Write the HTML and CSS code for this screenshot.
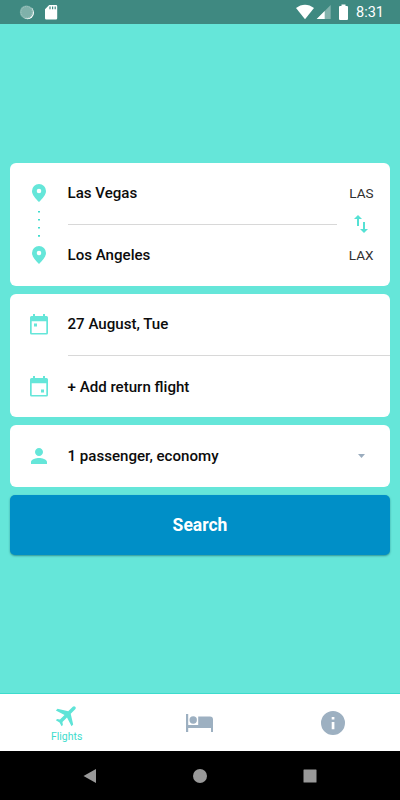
FILE: index.html
```html
<!DOCTYPE html>
<html lang="en">
<head>
<meta charset="utf-8">
<title>Flights</title>
<link rel="stylesheet" href="styles.css">
</head>
<body>
<div class="app">
  <header class="status">
    <svg class="status-left" width="60" height="24" viewBox="0 0 60 24">
      <circle cx="14.6" cy="12.8" r="6.4" fill="#fff"/>
      <circle cx="13.4" cy="12" r="6.6" fill="#7fb1aa"/>
      <circle cx="13.6" cy="12.1" r="5.6" fill="none" stroke="#a8cbc6" stroke-width=".8" stroke-dasharray="1 1"/>
      <path d="M32 9.200l4.200-4.200h6.800a1.200 1.200 0 0 1 1.200 1.200v12a1.200 1.200 0 0 1-1.200 1.200H33.200a1.200 1.200 0 0 1-1.200-1.200z" fill="#fff"/>
      <path d="M37 6.500v2.700M39.600 6.500v2.700M42.200 6.500v2.700" stroke="#3f8981" stroke-width="1.200"/>
    </svg>
    <svg class="status-right" width="54" height="24" viewBox="0 0 54 24">
      <path d="M0 8C5.500 3.500 12.500 3.500 18 8L9 19.200z" fill="#fff"/>
      <path d="M34.700 5v14H20.700z" fill="#83b3ad"/>
      <path d="M28.700 11v8h-8z" fill="#fff"/>
      <path d="M45.500 4.600h4v1.400h1.500a1 1 0 0 1 1 1v12a1 1 0 0 1-1 1h-7a1 1 0 0 1-1-1V7a1 1 0 0 1 1-1h1.500z" fill="#fff"/>
    </svg>
    <span class="clock">8:31</span>
  </header>

  <main class="search">
    <section class="card route">
      <div class="row">
        <span class="lead"><svg width="14" height="18" viewBox="0 0 14 18"><path fill-rule="evenodd" d="M7 0a7 7 0 0 0-7 7c0 3.800 3.400 7.500 7 11 3.600-3.500 7-7.200 7-11a7 7 0 0 0-7-7zm0 4.700a2.300 2.300 0 1 1 0 4.600 2.300 2.300 0 0 1 0-4.600z"/></svg></span>
        <span class="label">Las Vegas</span><span class="code">LAS</span>
      </div>
      <div class="divider">
        <svg class="dots" width="2" height="28" viewBox="0 0 2 28"><path d="M0 1h2v1.500H0zM0 9h2v1.500H0zM0 17h2v1.500H0zM0 25h2v1.800H0z"/></svg>
        <svg class="swap" width="24" height="24" viewBox="0 0 24 24"><path d="M16 17.010V10h-2v7.010h-3L15 21l4-3.990h-3zM9 3L5 6.990h3V14h2V6.990h3L9 3z"/></svg>
      </div>
      <div class="row">
        <span class="lead"><svg width="14" height="18" viewBox="0 0 14 18"><path fill-rule="evenodd" d="M7 0a7 7 0 0 0-7 7c0 3.800 3.400 7.500 7 11 3.600-3.500 7-7.200 7-11a7 7 0 0 0-7-7zm0 4.700a2.300 2.300 0 1 1 0 4.600 2.300 2.300 0 0 1 0-4.600z"/></svg></span>
        <span class="label">Los Angeles</span><span class="code">LAX</span>
      </div>
    </section>

    <section class="card dates">
      <div class="row">
        <span class="lead"><svg width="18" height="21" viewBox="0 0 18 21"><path fill-rule="evenodd" d="M3 0h2v2h8V0h2v2h1.500A1.500 1.500 0 0 1 18 3.500v15.500a1.500 1.500 0 0 1-1.500 1.500h-15A1.500 1.500 0 0 1 0 19V3.500A1.500 1.500 0 0 1 1.500 2H3zM1.700 7.200v11.800h14.600V7.200zM4 9.500h3v3H4z"/></svg></span>
        <span class="label">27 August, Tue</span>
      </div>
      <div class="divider"></div>
      <div class="row">
        <span class="lead"><svg width="18" height="21" viewBox="0 0 18 21"><path fill-rule="evenodd" d="M3 0h2v2h8V0h2v2h1.500A1.500 1.500 0 0 1 18 3.500v15.500a1.500 1.500 0 0 1-1.500 1.500h-15A1.500 1.500 0 0 1 0 19V3.500A1.500 1.500 0 0 1 1.500 2H3zM1.700 7.200v11.800h14.600V7.200zM11 13.500h3v3h-3z"/></svg></span>
        <span class="label">+ Add return flight</span>
      </div>
    </section>

    <section class="card passengers">
      <div class="row">
        <span class="lead"><svg width="24" height="24" viewBox="0 0 24 24"><path d="M12 12c2.210 0 4-1.790 4-4s-1.790-4-4-4-4 1.790-4 4 1.790 4 4 4zm0 2c-2.670 0-8 1.340-8 4v2h16v-2c0-2.660-5.330-4-8-4z"/></svg></span>
        <span class="label">1 passenger, economy</span>
        <svg class="caret" width="7" height="4" viewBox="0 0 7 4"><path d="M0 0h7L3.500 4z"/></svg>
      </div>
    </section>

    <button class="submit" type="button">Search</button>
  </main>

  <nav class="tabs">
    <a class="tab active">
      <svg width="28" height="28" viewBox="0 0 24 24"><path transform="rotate(45 12 12)" d="M21.500 16v-2l-8-5V3.500c0-.83-.67-1.500-1.500-1.500s-1.500.67-1.500 1.500V9l-8 5v2l8-2.500V19l-2 1.500V22l3.500-1 3.500 1v-1.500l-2-1.500v-5.500z"/></svg>
      <span>Flights</span>
    </a>
    <a class="tab">
      <svg width="27" height="18" viewBox="0 0 27 18"><path d="M0 0h2.200v11h10V2.500H24a3 3 0 0 1 3 3V18h-2v-4H2.200v4H0z"/><circle cx="7.200" cy="6" r="3.700"/></svg>
    </a>
    <a class="tab">
      <svg width="24" height="24" viewBox="0 0 24 24"><path fill-rule="evenodd" d="M12 0a12 12 0 1 0 0 24 12 12 0 0 0 0-24zM10.700 6h2.700v2.600h-2.700zM10.700 11h2.700v7.200h-2.700z"/></svg>
    </a>
  </nav>

  <footer class="system">
    <svg width="14" height="14" viewBox="0 0 14 14"><path d="M13 0v14L.5 7z"/></svg>
    <svg width="14" height="14" viewBox="0 0 14 14"><circle cx="7" cy="7" r="7"/></svg>
    <svg width="14" height="14" viewBox="0 0 14 14"><rect x=".5" y=".5" width="13" height="13" rx=".5"/></svg>
  </footer>
</div>
</body>
</html>
```
FILE: styles.css
```css
* { box-sizing: border-box; }
body { margin: 0; font-family: Roboto, "Liberation Sans", sans-serif; }
svg { display: block; flex: none; }
.app { width: 400px; height: 800px; display: flex; flex-direction: column; background: #65e6d9; overflow: hidden; }

.status { height: 24px; flex: none; display: flex; align-items: center; background: #3f8981; color: #fff; }
.status-left { margin-left: 13px; }
.status-right { margin-left: 223px; }
.clock { margin-left: 6px; padding-top: 2px; font-size: 14.500px; font-weight: 400; line-height: 24px; }

.search { flex: 1; min-height: 0; display: flex; flex-direction: column; gap: 8px; padding: 138.500px 10px 0; }
.card { flex: none; background: #fff; border-radius: 6px; }
.row { height: 61px; display: flex; align-items: center; }
.lead { width: 57.500px; flex: none; display: flex; justify-content: center; fill: #65e6d9; }
.label { flex: 1; font-size: 15.100px; font-weight: 500; color: #0c0c0c; }
.code { margin-right: 16.500px; font-size: 13.500px; color: #303030; }
.divider { height: 1px; margin: 0 0 .3px 57.500px; background: #d8d8d8; position: relative; }
.route .divider { margin-right: 53px; }
.dots { position: absolute; left: -29.500px; top: -14px; fill: #3fdccd; }
.swap { position: absolute; right: -36px; top: -12px; fill: #55e1d4; }
.caret { margin-right: 25px; fill: #9aacbe; }
.passengers { height: 61.500px; }
.submit { height: 60px; flex: none; border: 0; border-radius: 5px; background: #008fc7; box-shadow: 0 1px 2px rgba(0, 70, 80, .5); color: #fff; font: 700 17.500px/60px Roboto, "Liberation Sans", sans-serif; padding: 0; }

.tabs { height: 58px; flex: none; display: flex; border-top: 1px solid #3ddccd; background: #fff; }
.tab { flex: 1; display: flex; flex-direction: column; align-items: center; justify-content: center; fill: #9db0c1; }
.tab.active { fill: #5fe4d7; color: #3fdccd; font-size: 10.500px; line-height: 14px; gap: 1px; }

.system { height: 49px; flex: none; display: flex; align-items: center; justify-content: center; gap: 96px; background: #000; fill: #999; }
```
